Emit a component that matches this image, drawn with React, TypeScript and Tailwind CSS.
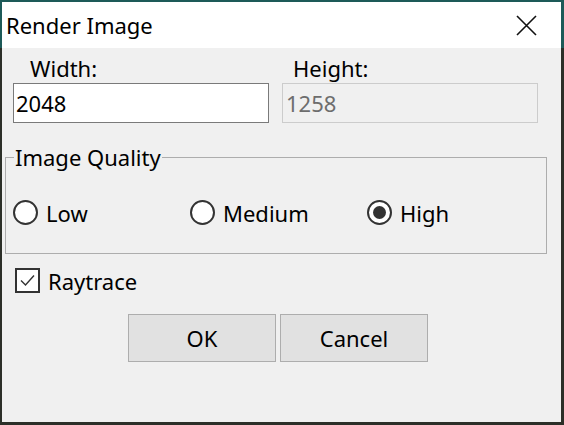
import React from "react";

const font = { fontFamily: '"Noto Sans", "Open Sans", sans-serif' };

const Radio = ({ label, checked }: { label: string; checked?: boolean }) => (
  <div className="flex items-center gap-[8px]">
    <span className="w-[25px] h-[25px] rounded-full border-2 border-[#333333] bg-white flex items-center justify-center">
      {checked && <span className="w-[13px] h-[13px] rounded-full bg-[#333333]" />}
    </span>
    <span>{label}</span>
  </div>
);

export default function App() {
  return (
    <div className="w-[564px] h-[425px] bg-[#2c2f28] overflow-hidden" style={font}>
      <div className="h-[2px] bg-[#1d5a58]" />
      <div className="flex">
        <div className="w-[2px] h-[46px] bg-[#1d5a58]" />
        <div className="w-[559px] h-[420px] bg-[#f0f0f0] flex flex-col text-[22px] text-black leading-none">
          {/* title bar */}
          <div className="h-[46px] bg-white flex items-center justify-between pl-[4px] pr-[24px]">
            <span className="text-[22px]">Render Image</span>
            <svg width="21" height="21" viewBox="0 0 21 21">
              <path d="M1 1 L20 20 M20 1 L1 20" stroke="#111" strokeWidth="1.6" />
            </svg>
          </div>

          <div className="flex gap-[13px] pl-[11px] mt-[9px]">
            <div className="w-[256px] flex flex-col">
              <span className="pl-[17px] h-[26px]">Width:</span>
              <div className="h-[40px] border border-[#7a7a7a] bg-white flex items-center px-[2px]">2048</div>
            </div>
            <div className="w-[256px] flex flex-col">
              <span className="pl-[11px] h-[26px]">Height:</span>
              <div className="h-[40px] border border-[#cccccc] bg-[#f0f0f0] flex items-center px-[3px] text-[#6d6d6d]">1258</div>
            </div>
          </div>

          <fieldset className="mt-[23px] ml-[3px] w-[542px] h-[108px] border border-[#adadad]">
            <legend className="ml-[8px] px-[1px]">Image Quality</legend>
            <div className="flex items-center pl-[7px] mt-[32px]">
              <div className="w-[177px]"><Radio label="Low" /></div>
              <div className="w-[177px]"><Radio label="Medium" /></div>
              <Radio label="High" checked />
            </div>
          </fieldset>

          <div className="flex items-center gap-[8px] pl-[13px] mt-[14px]">
            <span className="w-[25px] h-[25px] border-2 border-[#333333] bg-white flex items-center justify-center">
              <svg width="17" height="17" viewBox="0 0 17 17">
                <path d="M2 8.5 L6.5 13 L15 3.5" fill="none" stroke="#333" strokeWidth="1.4" />
              </svg>
            </span>
            <span>Raytrace</span>
          </div>

          <div className="flex gap-[4px] pl-[126px] mt-[21px]">
            <button className="w-[148px] h-[48px] bg-[#e1e1e1] border border-[#adadad] flex items-center justify-center">OK</button>
            <button className="w-[148px] h-[48px] bg-[#e1e1e1] border border-[#adadad] flex items-center justify-center">Cancel</button>
          </div>
        </div>
        <div className="w-[3px] h-[46px] bg-[#1d5a58]" />
      </div>
    </div>
  );
}
